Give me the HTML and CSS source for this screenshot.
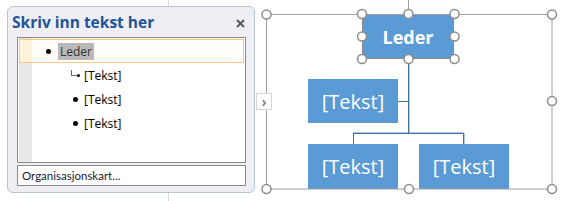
FILE: index.html
```html
<!DOCTYPE html>
<html lang="nb">
<head>
    <meta charset="UTF-8">
    <title>SmartArt - Organisasjonskart</title>
    <link rel="stylesheet" href="styles.css">
</head>
<body>

    <!-- Page edge behind the text pane -->
    <div class="page-edge"></div>

    <!-- Text pane -->
    <aside class="text-pane">
        <div class="pane-head">
            <h1 class="pane-title">Skriv inn tekst her</h1>
            <span class="pane-close">
                <svg width="9" height="9" viewBox="0 0 9 9"><path d="M1 1L8 8M8 1L1 8" stroke="#5a5a5a" stroke-width="2"/></svg>
            </span>
        </div>

        <div class="outline">
            <ul class="outline-list">
                <li class="row level-1 active"><span class="bullet"></span><span class="label selected">Leder</span></li>
                <li class="row level-2 assistant-row"><span class="elbow"></span><span class="bullet small"></span><span class="label">[Tekst]</span></li>
                <li class="row level-2"><span class="bullet"></span><span class="label">[Tekst]</span></li>
                <li class="row level-2"><span class="bullet"></span><span class="label">[Tekst]</span></li>
            </ul>
        </div>

        <div class="pane-foot">Organisasjonskart...</div>
    </aside>

    <!-- Diagram -->
    <div class="diagram">
        <svg class="connectors" width="562" height="201">
            <g stroke="#b3cae6" stroke-width="1" fill="none">
                <path d="M409.5 59V133M353 132.5H464M464.5 133V144"/>
            </g>
            <g stroke="#41719c" stroke-width="1" fill="none">
                <path d="M408.5 59V133.5M353 133.5H464M353.5 133V144M463.5 133V144M398 101.5H408"/>
            </g>
        </svg>

        <div class="node leader">Leder</div>
        <div class="node assistant">[Tekst]</div>
        <div class="node child-left">[Tekst]</div>
        <div class="node child-right">[Tekst]</div>

        <svg class="handles" width="562" height="201">
            <g stroke="#a0a0a0" stroke-width="1" fill="none">
                <rect x="266.5" y="14.5" width="285.5" height="174.5"/>
                <path d="M408.5 0V9"/>
            </g>
            <g stroke="#8c8c8c" stroke-width="1.5" fill="#fff">
                <circle cx="266.5" cy="14.5" r="4.5"/>
                <circle cx="552" cy="14.5" r="4.5"/>
                <circle cx="266.5" cy="189" r="4.5"/>
                <circle cx="552" cy="189" r="4.5"/>
                <circle cx="552" cy="101" r="4.5"/>
                <circle cx="409" cy="189" r="4.5"/>
                <circle cx="362" cy="14" r="4.5"/>
                <circle cx="408.5" cy="14" r="4.5"/>
                <circle cx="454.5" cy="14" r="4.5"/>
                <circle cx="362" cy="36.5" r="4.5"/>
                <circle cx="454.5" cy="36.5" r="4.5"/>
                <circle cx="362" cy="59" r="4.5"/>
                <circle cx="408.5" cy="59" r="4.5"/>
                <circle cx="454.5" cy="59" r="4.5"/>
            </g>
        </svg>

        <!-- Show/hide text pane -->
        <div class="pane-toggle">›</div>
    </div>

</body>
</html>
```

FILE: styles.css
```css
body {
    margin: 0;
    width: 562px;
    height: 201px;
    position: relative;
    overflow: hidden;
    background-color: #ffffff;
    font-family: 'Open Sans', 'Noto Sans', sans-serif;
}

.page-edge {
    position: absolute;
    left: 168px;
    top: 0;
    width: 1px;
    height: 201px;
    background-color: #d9d9d9;
}

/* Text pane */
.text-pane {
    position: relative; /* sits above the page edge */
    box-sizing: border-box;
    width: 248px;
    height: 187px;
    margin: 6px 0 0 7px;
    padding: 0 8px 0 9px;
    display: flex;
    flex-direction: column;
    background-color: #eeeef4;
    border: 1px solid #b5c4cf;
    border-radius: 6px;
}

.pane-head {
    height: 30px;
    display: flex;
    align-items: center;
    justify-content: space-between;
    margin-left: -5px;
}

.pane-title {
    margin: 0;
    font-size: 15.5px;
    font-weight: bold;
    color: #1f5597;
}

.pane-close {
    display: flex;
    margin-right: 1px;
    margin-top: 2px;
}

.outline {
    box-sizing: border-box;
    height: 126px;
    padding: 1px;
    border: 1px solid #8a8a8a;
    background: linear-gradient(to right, #ffffff 0, #ffffff 1px, #e9e9e9 1px, #e9e9e9 14px, #ffffff 14px);
}

.outline-list {
    list-style: none;
    margin: 0;
    padding: 0;
}

.row {
    box-sizing: border-box;
    height: 24px;
    display: flex;
    align-items: center;
    border: 1px solid transparent;
    font-size: 12px;
    color: #000000;
}

.row.active {
    border-color: #f7c57f;
    background: linear-gradient(to right, #fff3da 0, #fff3da 12px, #fffdf8 12px);
}

.level-1 {
    padding-left: 26px;
}

.level-2 {
    padding-left: 53px;
}

.bullet {
    width: 5px;
    height: 5px;
    border-radius: 50%;
    background-color: #000000;
    flex-shrink: 0;
}

.bullet.small {
    width: 3px;
    height: 3px;
}

.elbow {
    width: 5px;
    height: 5px;
    margin-left: -2px;
    margin-top: -5px;
    border-left: 1px solid #6a6a6a;
    border-bottom: 1px solid #6a6a6a;
    flex-shrink: 0;
}

.label {
    padding: 0 2px;
    margin-left: 4px;
    line-height: 17px;
}

.level-1 .label {
    margin-left: 7px;
}

.assistant-row .label {
    margin-left: 2px;
}

.label.selected {
    background-color: #b9b9b9;
    color: #333333;
}

.pane-foot {
    box-sizing: border-box;
    height: 21px;
    margin-top: 2px;
    padding-left: 4px;
    display: flex;
    align-items: center;
    border: 1px solid #8a8a8a;
    background-color: #ffffff;
    font-family: 'Lato', 'Open Sans', sans-serif;
    font-size: 11.5px;
    color: #1b1b2b;
}

/* Diagram canvas */
.diagram {
    position: absolute;
    left: 0;
    top: 0;
    width: 562px;
    height: 201px;
}

.connectors,
.handles {
    position: absolute;
    left: 0;
    top: 0;
}

.node {
    position: absolute;
    box-sizing: border-box;
    display: flex;
    align-items: center;
    justify-content: center;
    background-color: #5b9bd5;
    color: #ffffff;
    font-size: 20px;
}

.leader {
    left: 362px;
    top: 14px;
    width: 92px;
    height: 45px;
    font-size: 18px;
    font-weight: bold;
    border: 1px solid #8a8a8a;
}

.assistant {
    left: 308px;
    top: 79px;
    width: 90px;
    height: 44px;
}

.child-left {
    left: 308px;
    top: 144px;
    width: 90px;
    height: 45px;
}

.child-right {
    left: 419px;
    top: 144px;
    width: 90px;
    height: 45px;
}

.pane-toggle {
    position: absolute;
    left: 256px;
    top: 93px;
    box-sizing: border-box;
    width: 16px;
    height: 17px;
    display: flex;
    align-items: center;
    justify-content: center;
    background-color: #ffffff;
    border: 1px solid #d4d4d4;
    color: #8a8a8a;
    font-size: 14px;
    font-weight: bold;
    line-height: 1;
}
```
